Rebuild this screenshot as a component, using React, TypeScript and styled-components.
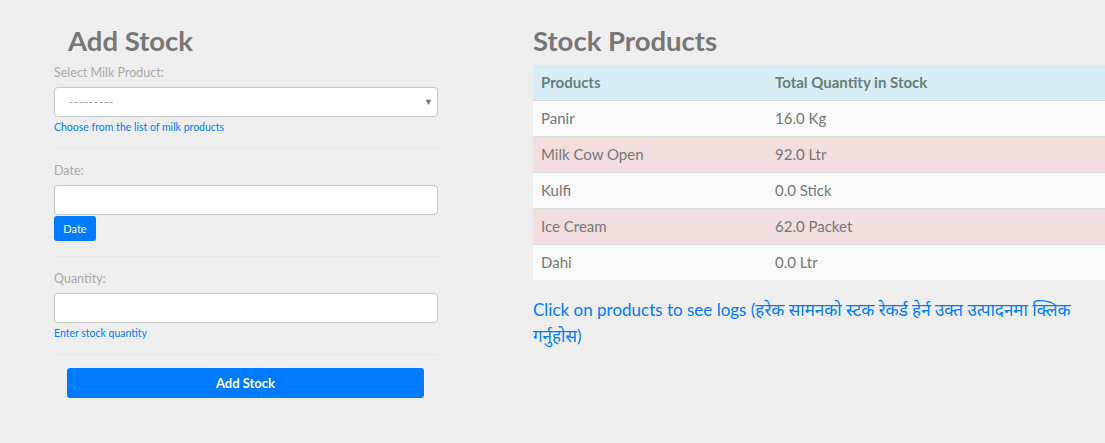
import React from 'react';
import styled, { createGlobalStyle } from 'styled-components';

const GlobalStyle = createGlobalStyle`
  html, body {
    margin: 0;
    padding: 0;
    background: #eeeeee;
    font-family: 'Lato', 'Noto Sans', sans-serif;
    color: #777;
  }
  * {
    box-sizing: border-box;
  }
`;

const Page = styled.div`
  display: flex;
  align-items: flex-start;
  padding: 25px 0 0 54px;
  min-height: 443px;
`;

const FormColumn = styled.div`
  width: 384px;
  flex-shrink: 0;
`;

const ListColumn = styled.div`
  flex: 1;
  margin-left: 95px;
`;

const Title = styled.h2<{ $indent?: number }>`
  margin: 0 0 0 ${(p) => p.$indent ?? 0}px;
  font-size: 27.5px;
  line-height: 32px;
  font-weight: 700;
  color: #777;
`;

const Group = styled.div<{ $top: number }>`
  margin-top: ${(p) => p.$top}px;
`;

const Label = styled.label`
  display: block;
  font-size: 12.5px;
  line-height: 16px;
  color: #aaa;
  margin-bottom: 6px;
`;

const Field = styled.div`
  position: relative;
  height: 30px;
  background: #fff;
  border: 1px solid #c8c8c8;
  border-radius: 4px;
`;

const SelectText = styled.span`
  position: absolute;
  left: 14px;
  top: 6px;
  font-size: 12px;
  color: #999;
  letter-spacing: 0.5px;
`;

const Caret = styled.span`
  position: absolute;
  right: 4px;
  top: 8px;
  font-size: 9px;
  color: #777;
`;

const Help = styled.div`
  margin-top: 3px;
  font-size: 10.5px;
  line-height: 14px;
  color: #007bff;
`;

const Divider = styled.hr<{ $top: number }>`
  margin: ${(p) => p.$top}px 0 0;
  border: 0;
  border-top: 1px solid #e6e6ea;
  height: 0;
`;

const SmallButton = styled.button`
  display: block;
  margin-top: 1px;
  height: 25px;
  width: 42px;
  padding: 0;
  background: #007bff;
  color: #fff;
  font-family: inherit;
  font-size: 11px;
  border: 0;
  border-radius: 3px;
`;

const SubmitButton = styled.button`
  display: block;
  width: 357px;
  height: 30px;
  margin: 13px 0 0 13px;
  background: #007bff;
  color: #fff;
  font-family: inherit;
  font-size: 13px;
  font-weight: 700;
  border: 0;
  border-radius: 3px;
`;

const Table = styled.table`
  width: 100%;
  margin-top: 8px;
  border-collapse: collapse;
  font-size: 15px;
`;

const HeadCell = styled.th<{ $width?: number }>`
  width: ${(p) => (p.$width ? `${p.$width}px` : 'auto')};
  height: 35px;
  padding: 0 8px;
  text-align: left;
  font-weight: 700;
  color: #66807a;
  background: #d9edf7;
  border-bottom: 1px solid #d2d8dc;
`;

const Row = styled.tr<{ $danger?: boolean }>`
  background: ${(p) => (p.$danger ? '#f2dede' : '#f9f9f9')};
`;

const Cell = styled.td`
  height: 36px;
  padding: 0 8px;
  color: #777;
  border-top: 1px solid #dddddd;
`;

const LogsLink = styled.a`
  display: block;
  margin-top: 17px;
  font-size: 17px;
  line-height: 26px;
  color: #007bff;
  text-decoration: none;
`;

const products = [
  { name: 'Panir', qty: '16.0 Kg', danger: false },
  { name: 'Milk Cow Open', qty: '92.0 Ltr', danger: true },
  { name: 'Kulfi', qty: '0.0 Stick', danger: false },
  { name: 'Ice Cream', qty: '62.0 Packet', danger: true },
  { name: 'Dahi', qty: '0.0 Ltr', danger: false },
];

const App: React.FC = () => {
  return (
    <>
      <GlobalStyle />
      <Page>
        <FormColumn>
          <Title $indent={14}>Add Stock</Title>

          <Group $top={8}>
            <Label>Select Milk Product:</Label>
            <Field>
              <SelectText>---------</SelectText>
              <Caret>▼</Caret>
            </Field>
            <Help>Choose from the list of milk products</Help>
          </Group>
          <Divider $top={14} />

          <Group $top={14}>
            <Label>Date:</Label>
            <Field />
            <SmallButton>Date</SmallButton>
          </Group>
          <Divider $top={15} />

          <Group $top={14}>
            <Label>Quantity:</Label>
            <Field />
            <Help>Enter stock quantity</Help>
          </Group>
          <Divider $top={14} />

          <SubmitButton>Add Stock</SubmitButton>
        </FormColumn>

        <ListColumn>
          <Title>Stock Products</Title>
          <Table>
            <thead>
              <tr>
                <HeadCell $width={234}>Products</HeadCell>
                <HeadCell>Total Quantity in Stock</HeadCell>
              </tr>
            </thead>
            <tbody>
              {products.map((p) => (
                <Row key={p.name} $danger={p.danger}>
                  <Cell>{p.name}</Cell>
                  <Cell>{p.qty}</Cell>
                </Row>
              ))}
            </tbody>
          </Table>
          <LogsLink href="#">
            Click on products to see logs (हरेक सामनको स्टक रेकर्ड हेर्न उक्त उत्पादनमा क्लिक गर्नुहोस)
          </LogsLink>
        </ListColumn>
      </Page>
    </>
  );
};

export default App;
